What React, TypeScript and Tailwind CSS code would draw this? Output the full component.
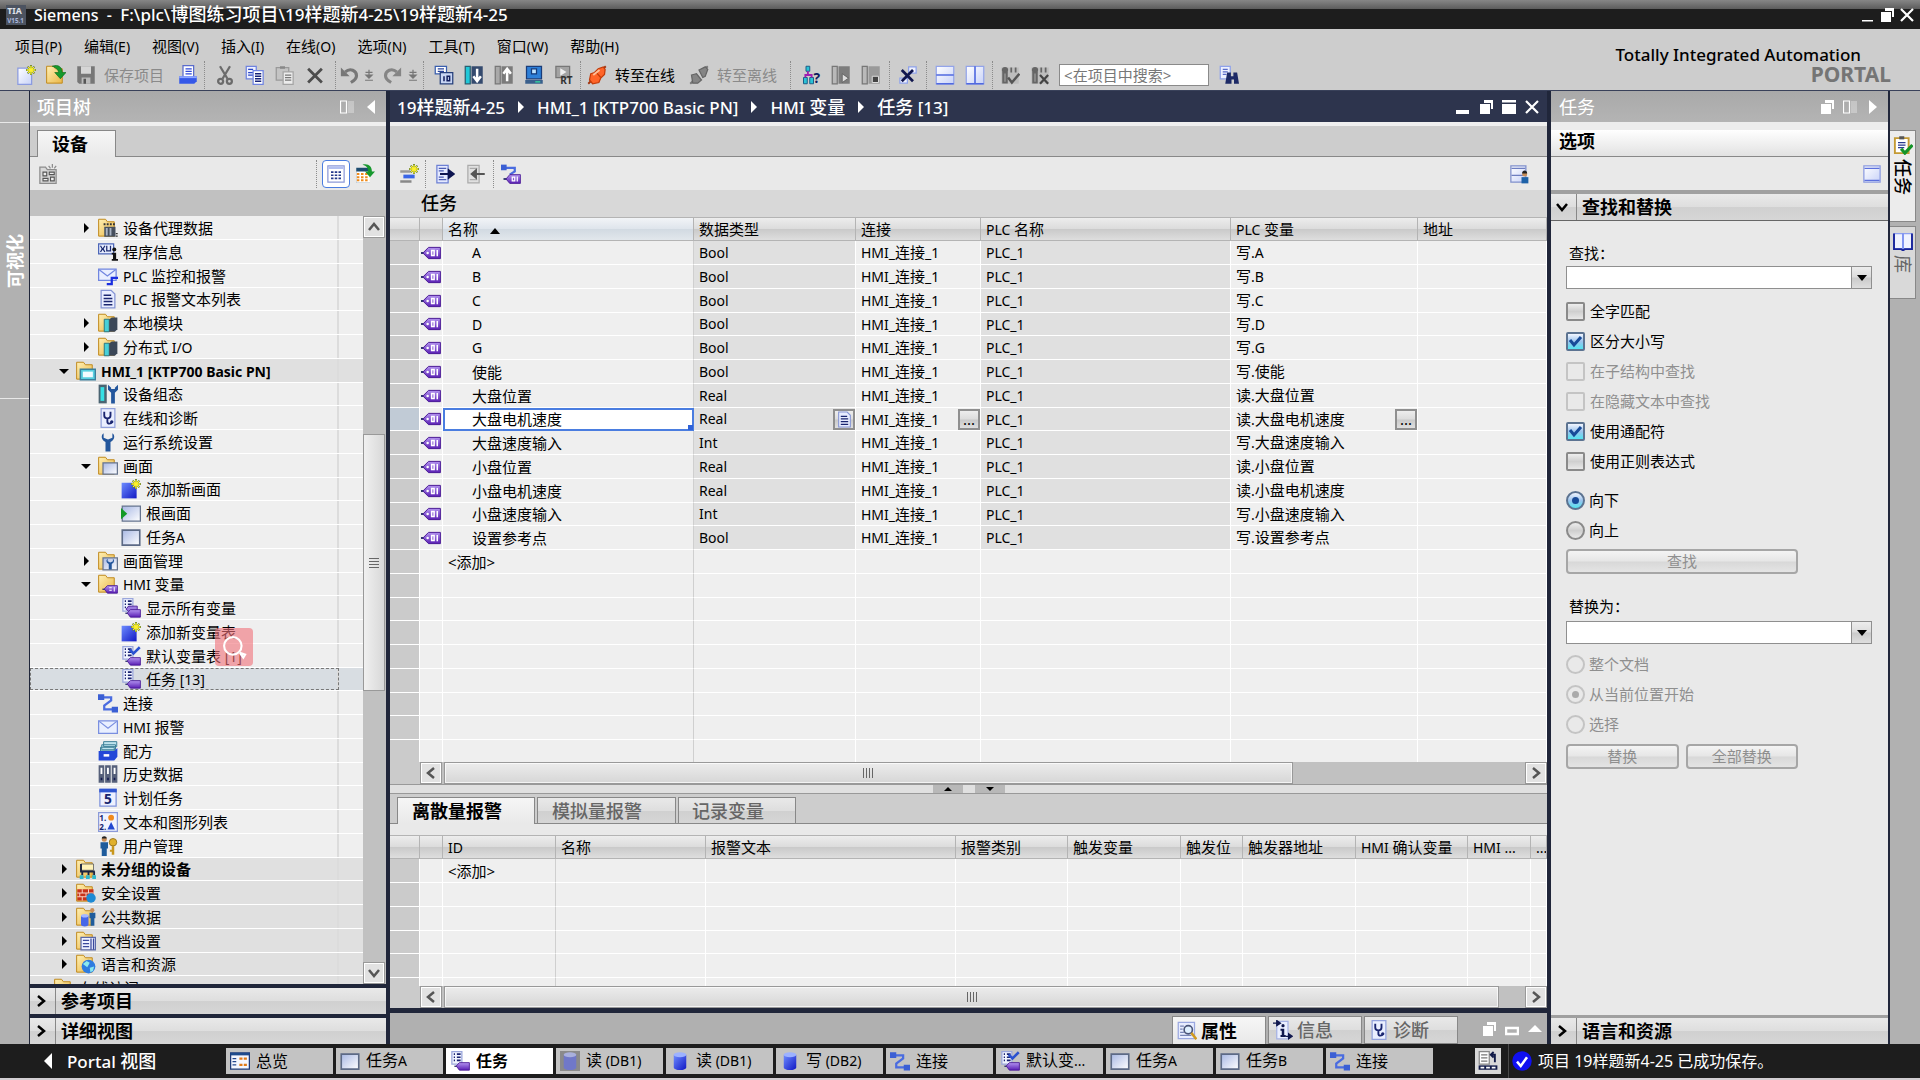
import { Fragment, type ReactNode } from "react"

const HEAD = "bg-[linear-gradient(#ededed,#dcdcdc_48%,#cacaca_52%,#dedede)]"
const BAR = "bg-[linear-gradient(#e9e9e9,#dedede_50%,#d0d0d0_52%,#d6d6d6)]"
const PANEL_HEAD = "bg-[linear-gradient(#a9a9a9,#b4b4b4)]"

const folder = <path d="M.5 1h5.500L7.500 3H13v11.500H.5z" fill="url(#gFolder)" stroke="#c08a1e" strokeWidth=".8" />
const list = (
    <>
        <path d="M1.5.5h8v10h-8z" fill="#f2f5ff" stroke="#9aa6dc" />
        <path d="M3 2.5h1M3 5h1M3 7.500h1M5.500 2.500h3M5.500 5h3M5.500 7.500h3" stroke="#1b2472" strokeWidth="1.300" />
    </>
)
const smallTag = (
    <>
        <path d="M3.500 12.200h2" stroke="#222a66" />
        <path d="M5 12l2.500-2.700h8v6h-8z" fill="url(#gPurple)" stroke="#4a1a96" strokeWidth=".7" />
    </>
)
const star = (
    <>
        <path d="M12 0v8M8 4h8M9.300 1.300l5.400 5.400M14.700 1.300L9.300 6.700" stroke="#5c7a3c" strokeWidth="1.600" />
        <path d="M12 .5v7M8.500 4h7M9.700 1.700l4.600 4.600M14.300 1.700L9.700 6.300" stroke="#fff22a" strokeWidth="1.100" />
    </>
)
const wrench = (fill: string) => <path d="M4.500 1v3.500L8 6l3.500-1.500V1c2 1 2.500 5-1.500 7v7.500H6V8C2 6 2.500 2 4.500 1z" fill={fill} />

const ICONS: Record<string, ReactNode> = {
    logo: (
        <>
            <path d="M0 0h16v16H0z" fill="#4c5360" />
            <text x="1" y="7.500" fontSize="7" fontWeight="700" fill="#dfe3ea">TIA</text>
            <text x="1" y="14" fontSize="5" fontWeight="700" fill="#a9b6dc">V15.1</text>
        </>
    ),
    newFile: (
        <>
            <path d="M1.500 2.500h11v13h-11z" fill="url(#gWin)" stroke="#8b9be0" />
            {star}
        </>
    ),
    open: (
        <>
            {folder}
            <path d="M5 1c5-2 8 1 8 5h3l-4.500 5L7 6h3c0-2-2-4-5-5z" fill="#159a2c" stroke="#0a6a1a" strokeWidth=".5" />
        </>
    ),
    save: (
        <>
            <path d="M1 1h14v14H2.500L1 13.500z" fill="#777" />
            <path d="M4 1h8v6H4z" fill="#d6d6d6" />
            <path d="M4.500 10h7v5h-7z" fill="#bbb" />
            <path d="M6 11h2v4H6z" fill="#555" />
        </>
    ),
    print: (
        <>
            <path d="M4 .5h8.500V10H4z" fill="#fff" stroke="#5a6ccc" />
            <path d="M6 3h5M6 5h5M6 7h5" stroke="#2f49d8" />
            <path d="M1 9h14v4l-2 2H1z" fill="#3558e8" />
            <path d="M1 9h14v1.500H1z" fill="#8ca4ff" />
        </>
    ),
    cut: (
        <g fill="none" stroke="#6b6b6b" strokeWidth="1.800">
            <path d="M4 1l6 10M12 1L6 11" />
            <circle cx="4.500" cy="13" r="2" />
            <circle cx="11.500" cy="13" r="2" />
        </g>
    ),
    copy: (
        <>
            <path d="M1 1h8v10H1z" fill="#eef1ff" stroke="#6f83e0" />
            <path d="M2.500 3.500h4M2.500 6h4M2.500 8h4" stroke="#2b46c4" />
            <path d="M6.500 4.500h8v11h-8z" fill="#fff" stroke="#6f83e0" />
            <path d="M8 7h5M8 9h5M8 11h5M8 13h5" stroke="#16237a" strokeWidth="1.200" />
        </>
    ),
    paste: (
        <>
            <path d="M1 2h10v10H1z" fill="#c4c4c4" stroke="#999" />
            <path d="M4 1h4v2H4z" fill="#888" />
            <path d="M6.500 5.500h8v10h-8z" fill="#ececec" stroke="#a4a4a4" />
            <path d="M8 8h5M8 10h5M8 12h5" stroke="#777" />
        </>
    ),
    del: <path d="M2.500 3l11 11M13.500 3l-11 11" stroke="#4d4d4d" strokeWidth="2.200" />,
    undo: (
        <>
            <path d="M1.500 2v7h7z" fill="#777" />
            <path d="M5 5.500c4-3.500 9-1 9 3 0 2.500-2 4-4.500 5.500" fill="none" stroke="#777" strokeWidth="2.500" />
        </>
    ),
    redo: (
        <>
            <path d="M14.500 2v7h-7z" fill="#858585" />
            <path d="M11 5.500c-4-3.500-9-1-9 3C2 11 4 12.500 6.500 14" fill="none" stroke="#858585" strokeWidth="2.500" />
        </>
    ),
    more: <path d="M8 2v6M4 5h8M4.500 8h7L8 11.500zM3.500 14h9" stroke="#777" strokeWidth="1.400" fill="#777" />,
    compile: (
        <>
            <path d="M1 1h9v6H1z" fill="#fff" stroke="#3a5fae" />
            <path d="M3 3h5M3 5h5" stroke="#29439c" />
            <path d="M5 6h10v9H5z" fill="#c8d6f4" stroke="#27407c" />
            <path d="M8 9v4M10.500 9h2v3.500h-2z" stroke="#101d5c" fill="none" strokeWidth="1.200" />
        </>
    ),
    download: (
        <>
            <path d="M1 1h4v14H1z" fill="#20c8d8" stroke="#2a5f70" />
            <path d="M6 1h9v14H6z" fill="#344a6e" />
            <path d="M10.500 3v9M7.500 9l3 4 3-4" stroke="#fff" strokeWidth="2" fill="none" />
        </>
    ),
    upload: (
        <>
            <path d="M1 1h4v14H1z" fill="#a9a9a9" stroke="#777" />
            <path d="M6 1h9v14H6z" fill="#7b7b7b" />
            <path d="M10.500 13V4M7.500 7l3-4 3 4" stroke="#fff" strokeWidth="2" fill="none" />
        </>
    ),
    sim: (
        <>
            <path d="M2 1h12v10H2z" fill="#2d7fd8" stroke="#1a3c78" />
            <path d="M6 3h4v4H6z" fill="#bfe3ff" stroke="#143a7a" />
            <path d="M1 12h14v3H1z" fill="#3a5f8c" />
            <path d="M9 13.500h4" stroke="#35e0a0" />
        </>
    ),
    rt: (
        <>
            <path d="M1.500 1h11v9h-11z" fill="#a3a3a3" stroke="#777" />
            <path d="M5 2.500l5 3-5 3z" fill="#eee" />
            <text x="5" y="15" fontSize="8" fontWeight="700" fill="#333">RT</text>
        </>
    ),
    plug: (
        <>
            <path d="M1 15l3-3M12 4l3-3" stroke="#a03410" strokeWidth="1.500" />
            <path d="M3 7l3-1 3-3 4-1.500 1.500 2-.5 4-3 3-1.500 3.500-5 1-2.500-3z" fill="#ff6428" stroke="#c23c0a" />
            <path d="M7 5.500l4 4.500" stroke="#c23c0a" />
            <path d="M5 8l5-4" stroke="#ffc09a" strokeWidth="1.500" />
        </>
    ),
    unplug: (
        <>
            <path d="M1 15l3-3M12 4l3-3" stroke="#777" strokeWidth="1.500" />
            <path d="M2 8l4-1 4 5-3 2.500H3zM8 4l5-2.500 2 2L13 9l-2 1z" fill="#858585" stroke="#666" />
        </>
    ),
    access: (
        <>
            <path d="M4 1h3v4H4zM2 10h3v5H2zM7 10h3v5H7z" fill="#2ac3d6" stroke="#1c5f88" strokeWidth=".8" />
            <path d="M5.500 5v3M3.500 10V8h5v2" stroke="#a01fb0" strokeWidth="1.500" fill="none" />
            <text x="10" y="14" fontSize="11" fontWeight="700" fill="#101a5e">?</text>
        </>
    ),
    start: (
        <>
            <path d="M1 1h4v14H1z" fill="#b9b9b9" stroke="#777" />
            <path d="M6 1h9v14H6z" fill="#7d7d7d" />
            <path d="M9 7l5 3.500L9 14z" fill="#ddd" stroke="#555" strokeWidth=".6" />
        </>
    ),
    stop: (
        <>
            <path d="M1 1h4v14H1z" fill="#b9b9b9" stroke="#777" />
            <path d="M6 1h9v14H6z" fill="#9a9a9a" />
            <path d="M9 9h5v5H9z" fill="#444" stroke="#ddd" strokeWidth=".8" />
        </>
    ),
    cross: (
        <>
            <path d="M8.500 1.500h6v5h-6zM1.500 10.500h6v4h-6z" fill="#eef1ff" stroke="#8fa2ea" />
            <path d="M3 4l9 9M12 4l-9 9" stroke="#10164e" strokeWidth="2.200" />
        </>
    ),
    splitH: (
        <>
            <path d="M1 1h14v14H1z" fill="url(#gWin)" stroke="#93a4ea" />
            <path d="M1 8h14M1 15h14" stroke="#5069e0" strokeWidth="1.300" />
        </>
    ),
    splitV: (
        <>
            <path d="M1 1h14v14H1z" fill="url(#gWin)" stroke="#93a4ea" />
            <path d="M8 1v14M1 15h14" stroke="#5069e0" strokeWidth="1.300" />
        </>
    ),
    libOk: (
        <>
            <path d="M1 2h14v13H1z" fill="#bdbdbd" />
            <circle cx="4" cy="4" r="2.500" fill="#666" />
            <path d="M2.500 6h3v8h-3zM9 2v4M12.500 2v4" stroke="#666" strokeWidth="1.400" fill="#888" />
            <path d="M6.500 10l3 4 6-7" stroke="#555" strokeWidth="2" fill="none" />
        </>
    ),
    libNo: (
        <>
            <path d="M1 2h14v13H1z" fill="#bdbdbd" />
            <circle cx="4" cy="4" r="2.500" fill="#666" />
            <path d="M2.500 6h3v8h-3zM9 2v4M12.500 2v4" stroke="#666" strokeWidth="1.400" fill="#888" />
            <path d="M8 8l6.500 7M14.500 8L8 15" stroke="#444" strokeWidth="1.800" />
        </>
    ),
    find: (
        <>
            <path d="M1 1h8v10H1z" fill="#eef1ff" stroke="#8fa2ea" />
            <path d="M3 3.500h4M3 5.500h4M3 7.500h3" stroke="#5a6cc8" />
            <path d="M6.500 6h3v3h2V6h3l1.500 9h-4v-3.500h-2V15H5z" fill="#1d2a66" />
        </>
    ),
    treeGrey: (
        <>
            <path d="M1.500 2.500H6l1.500 2h7v11h-13z" fill="#d9d9d9" stroke="#8c8c8c" />
            <path d="M4 6.500h3v3H4zM9 6.500h4v2H9zM4 11.500h4v2H4zM10 10.500h3v3h-3z" stroke="#555" fill="#eee" strokeWidth=".9" />
            <path d="M11.500 0v3M8.500 1.500l1.500 2M14.500 1.500l-1.500 2" stroke="#8c8c8c" />
        </>
    ),
    grid: (
        <>
            <path d="M1.500 1.500h13v13h-13z" fill="#fff" stroke="#8c99d8" />
            <path d="M2 3h12" stroke="#b3c0f0" strokeWidth="2" />
            <path d="M4 6.500h8M4 9h8M4 11.500h8" stroke="#253a8c" strokeDasharray="2 1" strokeWidth="1.300" />
        </>
    ),
    gridGo: (
        <>
            <path d="M1 3h11v12H1z" fill="#1d4c70" />
            <path d="M1 6h11v9H1z" fill="#fff" />
            <path d="M1.500 8h10M1.500 10.500h10M1.500 13h10" stroke="#ef8a1a" strokeDasharray="2 1.300" strokeWidth="1.600" />
            <path d="M6 .5c5-1 7.500 1.500 7.500 5.500H16l-4 4.500L8 6h2.500c0-3-1-4.500-4.500-5.500z" fill="#17982e" />
        </>
    ),
    addRow: (
        <>
            <path d="M1 5h8v2H1z" fill="#999" />
            <path d="M3.500 8.500h9v3h-9z" fill="#3a66e8" />
            <path d="M1 13h9v2H1z" fill="#888" />
            {star}
        </>
    ),
    exportI: (
        <>
            <path d="M1.500 1h9v14h-9z" fill="#e4e9ff" stroke="#6d80d4" />
            <path d="M3 3.500h6M3 12.500h6M3 5.500h4M3 10.500h4" stroke="#4b5db4" />
            <path d="M4 8h9M11 5l4 3-4 3z" stroke="#0d1550" strokeWidth="1.600" fill="#0d1550" />
        </>
    ),
    importI: (
        <>
            <path d="M1.500 1h9v14h-9z" fill="#e0e0e0" stroke="#aaa" />
            <path d="M3 3.500h6M3 12.500h6" stroke="#aaa" />
            <path d="M15 8H6M8 5L4.500 8 8 11z" stroke="#555" strokeWidth="1.500" fill="#555" />
        </>
    ),
    linkTag: (
        <>
            <path d="M3 3h8v3L7 8.500" stroke="#4a6ce0" strokeWidth="1.800" fill="none" />
            <path d="M0 .5h4.500V5H0z" fill="#3b5fd4" />
            <path d="M2 12h3" stroke="#222a66" strokeWidth="1.400" />
            <path d="M4 12l3-3.500h8.500v7H7z" fill="url(#gPurple)" stroke="#4a1a96" strokeWidth=".7" />
            <path d="M9 10.500h2v3H9zM13 10v4" stroke="#fff" fill="none" />
        </>
    ),
    userWin: (
        <>
            <path d="M1.500 1.500h12v13h-12z" fill="url(#gWin)" stroke="#8090cc" />
            <path d="M2 3.500h11M2 9h11" stroke="#6e7ec0" />
            <circle cx="12.500" cy="8" r="2" fill="#c88d58" />
            <path d="M10.500 7.500c0-3 4-3 4 0z" fill="#222" />
            <path d="M10 10.500h5.500v5H10z" fill="#1e62a8" />
        </>
    ),
    win: (
        <>
            <path d="M1.500 1.500h13v13h-13z" fill="url(#gWin)" stroke="#8c9be0" />
            <path d="M2 3.500h12M2 13h12" stroke="#5c70dc" />
        </>
    ),
    clip: (
        <>
            <path d="M1.500 2.500h11v12h-11z" fill="#fff" stroke="#c49a34" strokeWidth="1.500" />
            <path d="M5 1h4v2.500H5z" fill="#555" />
            <path d="M4 6h6M4 8h6M4 10h5" stroke="#2a3a90" />
            <path d="M6.500 11l3 3.500L15.500 8" stroke="#149428" strokeWidth="2.500" fill="none" />
        </>
    ),
    book: (
        <>
            <path d="M1 2h14v12H1z" fill="#f0f3ff" stroke="#8ea0f0" />
            <path d="M.8 2v12.500h5.700l1.500 1 1.500-1h5.700V2" stroke="#18249a" strokeWidth="1.500" fill="none" />
            <path d="M8 2v12" stroke="#7c90f0" strokeWidth="1.500" />
        </>
    ),
    fData: (
        <>
            {folder}
            <path d="M5 7h9v8H5z" fill="#47505e" />
            <path d="M4.500 5h9" stroke="#333" strokeDasharray="1.500 1" strokeWidth="1.600" />
            <path d="M7 8v6M10 8v6" stroke="#aab4c4" strokeWidth="1.500" />
            <path d="M15 12v4" stroke="#333" strokeDasharray="1 1" strokeWidth="1.500" />
        </>
    ),
    prog: (
        <>
            <path d="M.5 1.500h12v8H.5z" fill="#e8eeff" stroke="#4c66b8" />
            <path d="M2 3l1.500 2.500L2 8M5.500 3L4 5.500 5.500 8M7 3v4h3V3" stroke="#1b2a70" fill="none" />
            <circle cx="13" cy="6" r="1.600" fill="#111" />
            <path d="M11 8.500h3.500v5H16V15h-5v-1.500h1V10h-1z" fill="#111" />
        </>
    ),
    mailPlc: (
        <>
            <path d="M.5 2.500h14v9H.5z" fill="#e9efff" stroke="#7186e0" />
            <path d="M1 3l6.500 5L14 3" stroke="#7186e0" fill="none" />
            <path d="M7 14.500h4V9.500h5" stroke="#1a2ee0" strokeWidth="1.800" fill="none" />
        </>
    ),
    mail: (
        <>
            <path d="M.5 3h15v10H.5z" fill="#e9efff" stroke="#7a8fe0" />
            <path d="M1 3.500L8 9l7-5.500" stroke="#7a8fe0" fill="none" />
        </>
    ),
    doc: (
        <>
            <path d="M2.500 1h8l3 3v11h-11z" fill="#e8edff" stroke="#8494d4" />
            <path d="M4.500 5h6M4.500 7.500h7M4.500 10h7M4.500 12.500h7" stroke="#1a2670" strokeWidth="1.200" />
        </>
    ),
    fModule: (
        <>
            {folder}
            <path d="M5 5h4v10H5z" fill="#48d0d8" stroke="#2c7880" strokeWidth=".8" />
            <path d="M9 5l2-1.500h4.500V13l-2 2H9z" fill="#3b4758" />
        </>
    ),
    fHmi: (
        <>
            {folder}
            <path d="M3.500 6.500h12v8.500h-12z" fill="#58cfe0" stroke="#3a7f9c" strokeWidth="1.200" />
            <path d="M5.500 8.500h8v4.500h-8z" fill="#f2fbff" />
        </>
    ),
    config: (
        <>
            <path d="M.5.5h6.500v15H.5z" fill="#4b6472" />
            <path d="M2 2.500h3v11H2z" fill="#36e0e4" />
            <path d="M8 .5v4L10.500 7v8.500h3V7L16 4.500v-4L13.500 3v1h-3V3z" fill="#23569c" />
        </>
    ),
    diag: (
        <>
            <path d="M2.500.5h11v15h-11z" fill="#eaefff" stroke="#93a2dc" />
            <path d="M5 3v3c0 3 5 3 5 0V3M7.500 8.500V11c0 2 3 2 3.500 0" stroke="#1a2670" strokeWidth="1.500" fill="none" />
            <circle cx="11" cy="11" r="1.300" fill="#1a2670" />
        </>
    ),
    wrench: wrench("#23569c"),
    fScreen: (
        <>
            {folder}
            <path d="M4 5.500h11.500v9H4z" fill="url(#gScreen)" stroke="#66748e" />
        </>
    ),
    addNew: (
        <>
            <path d="M.5 3h12v12.500H.5z" fill="url(#gBlue)" />
            {star}
        </>
    ),
    rootScreen: (
        <>
            <path d="M1 2.500h14.500v12H1z" fill="url(#gScreen)" stroke="#66748e" />
            <path d="M0 4l5 4.500L0 13z" fill="#139a26" />
        </>
    ),
    screen: <path d="M1 2.500h14v12H1z" fill="url(#gScreen)" stroke="#5c6a86" strokeWidth="1.300" />,
    fManage: (
        <>
            {folder}
            <path d="M4 5.500h11.500v9.500H4z" fill="url(#gScreen)" stroke="#66748e" />
            <g transform="translate(5 5.500) scale(.6)">{wrench("#23569c")}</g>
        </>
    ),
    fTag: (
        <>
            {folder}
            {smallTag}
            <path d="M9 11h2M9 13h2M13 10.500v3.500" stroke="#fff" strokeWidth=".8" />
        </>
    ),
    allTags: (
        <>
            {list}
            <path d="M4 9l2-2.500h7v4H6z" fill="#9c7be0" stroke="#4a1a96" strokeWidth=".7" />
            {smallTag}
        </>
    ),
    defTags: (
        <>
            {list}
            <path d="M7 3l3 3 5-5" stroke="#2a52d0" strokeWidth="2" fill="none" />
            {smallTag}
        </>
    ),
    tags: (
        <>
            {list}
            {smallTag}
        </>
    ),
    link: (
        <>
            <path d="M3 3.500h7.500V6L5 10v3h8" stroke="#4a6ce0" strokeWidth="1.800" fill="none" />
            <path d="M0 1h5v4.500H0zM11 11h5v4.500h-5z" fill="#3b5fd4" />
        </>
    ),
    recipe: (
        <>
            <path d="M4.500 .5H15v4H4.500zM3 3h11v4H3zM2 5h11v3H2z" fill="#bfe4ee" stroke="#3e8098" strokeWidth=".8" />
            <path d="M.5 8h12.500l2.500-2.500v7L13 15.500H.5z" fill="#2348d8" />
            <path d="M4.500 10.500h4.500v2H4.500z" fill="#fff" />
        </>
    ),
    history: (
        <>
            <path d="M.5 1h4.500v14H.5zM5.700 1h4.500v14H5.700zM11 1h4.500v14H11z" fill="#56607a" />
            <path d="M2 3h1.500v5H2zM7.200 3h1.500v5H7.200zM12.500 3H14v5h-1.500z" fill="#fff" />
            <path d="M2.800 11v2M8 11v2M13.200 11v2" stroke="#10184e" strokeWidth="1.300" />
        </>
    ),
    task: (
        <>
            <path d="M1.500 1.500h13v13h-13z" fill="#eef1ff" stroke="#7f92dc" />
            <path d="M1 .5h14v3H1z" fill="#2f55d0" />
            <text x="4.800" y="13" fontSize="11" fontWeight="700" fill="#17246e">5</text>
        </>
    ),
    textList: (
        <>
            <path d="M.5.500h15v15H.5z" fill="#f2f4ff" stroke="#8b9ad8" />
            <text x="1" y="7" fontSize="6.500" fontWeight="700" fill="#17246e">1.</text>
            <text x="1" y="14.500" fontSize="6.500" fontWeight="700" fill="#17246e">2.</text>
            <circle cx="10.500" cy="4.500" r="2.300" fill="#f08a1c" />
            <path d="M10.500 8l3 6h-6z" fill="#2348d0" />
        </>
    ),
    users: (
        <>
            <circle cx="5" cy="2.500" r="2" fill="#c88d58" />
            <path d="M3 2c0-2.500 4-2.500 4 0z" fill="#222" />
            <path d="M2 5h6v5H7v6H3v-6H2z" fill="#1f5c9c" />
            <circle cx="12" cy="5" r="3" fill="#e0b02c" stroke="#93701a" strokeWidth=".7" />
            <path d="M11 8h2v7h-2zM9.500 11H11v1.500H9.500z" fill="#c8961c" />
        </>
    ),
    fUngrouped: (
        <>
            {folder}
            <path d="M4 4h10v5H4z" fill="#fff2b8" stroke="#666" strokeWidth=".7" />
            <path d="M4 4v6h11M5 10v3M10 10v3M14.500 10v3" stroke="#1a2440" strokeWidth="1.500" fill="none" />
            <path d="M3 13h3v3H3zM8 13h3v3H8zM13 13h3v3h-3z" fill="#2fb8cc" />
        </>
    ),
    fSafe: (
        <>
            {folder}
            <path d="M1 5h13v9H1z" fill="#c8321a" />
            <path d="M1 8h13M1 11h13M5 5v3M10 5v3M3 8v3M8 8v3M5 11v3" stroke="#f6d0c4" strokeWidth=".8" />
            <circle cx="12" cy="12" r="3.800" fill="#1d8ad4" />
        </>
    ),
    fShared: (
        <>
            {folder}
            <path d="M4 7v7c0 2 6 2 6 0V7z" fill="#4667e8" />
            <ellipse cx="7" cy="7" rx="3" ry="1.400" fill="#a5b8ff" />
            <circle cx="13" cy="2.500" r="1.700" fill="#c88d58" />
            <path d="M10.800 4.500h4.700V9h-.8v6h-3V9h-.9z" fill="#1f5c9c" />
        </>
    ),
    fDocs: (
        <>
            {folder}
            <path d="M4 5h11.500v10H4z" fill="#eef1ff" stroke="#5a68a8" />
            <path d="M5.500 7.500h5M5.500 10h5M5.500 12.500h5M12 6v9M14 6v9" stroke="#3a489c" />
        </>
    ),
    fLang: (
        <>
            {folder}
            <circle cx="10" cy="10" r="5.500" fill="#2f7ce0" />
            <path d="M5.500 8l3-2.500L11 7l-2 3.500zM11 11l3.500-1-1 3.500-2 1z" fill="#8be8ee" />
        </>
    ),
    folder,
    tag: (
        <>
            <path d="M0 8h3" stroke="#222a66" strokeWidth="1.500" />
            <path d="M1.500 8L6 3.500h9.500v9H6z" fill="url(#gPurple)" stroke="#4a1a96" strokeWidth=".8" />
            <path d="M8.500 6h2v4h-2zM13 5.500v5" stroke="#fff" strokeWidth="1.200" fill="none" />
            <circle cx="5.300" cy="8" r="1" fill="#fff" />
        </>
    ),
    overview: (
        <>
            <path d="M.5 1.500h15v13H.5z" fill="#f4f6ff" stroke="#1e3a78" />
            <path d="M.5 1.500h15v2H.5z" fill="#1e4a8c" />
            <path d="M2 6h3M2 8.500h3M2 11h3" stroke="#23468c" />
            <path d="M7.500 6h6M7.500 11h6" stroke="#e07a18" strokeWidth="1.800" strokeDasharray="2.500 1" />
        </>
    ),
    db: (
        <>
            <path d="M3 3v10c0 3 10 3 10 0V3z" fill="url(#gBlue)" />
            <ellipse cx="8" cy="3" rx="5" ry="2" fill="#9db2ff" />
        </>
    ),
    dbGrey: (
        <>
            <path d="M0 0h16v16H0z" fill="#8a8a8a" />
            <path d="M3 3v10c0 3 10 3 10 0V3z" fill="#7078c8" />
            <ellipse cx="8" cy="3" rx="5" ry="2" fill="#a9b0dc" />
        </>
    ),
    props: (
        <>
            <path d="M1 1h13v13H1z" fill="#e8edff" stroke="#9aa8e0" />
            <path d="M2.500 4h3M2.500 6.500h2M2.500 9h3M2.500 11.500h9" stroke="#7684b4" />
            <circle cx="9" cy="7" r="3.300" fill="#dff0ff" stroke="#4a5578" strokeWidth="1.300" />
            <path d="M11.500 9.500l4 5" stroke="#d09a20" strokeWidth="2" />
        </>
    ),
    info: (
        <>
            <path d="M3 1h9v14H3z" fill="#eaefff" stroke="#a6b2e4" />
            <path d="M0 2.500h4M3 .5l3 2-3 2zM10 13h4M12.500 11l3 2-3 2z" stroke="#10184e" fill="#10184e" />
            <circle cx="8" cy="4.500" r="1.300" fill="#10184e" />
            <path d="M6 7h3v5h1.200v1.500H6V12h1V8.500H6z" fill="#10184e" />
        </>
    ),
    switchWin: (
        <>
            <path d="M1 .5h8v10H1z" fill="#fff" stroke="#888" />
            <path d="M2.500 3h5M2.500 5.500h5M2.500 8h5" stroke="#777" />
            <path d="M13.500 9V3H11M12.500 .8L10.200 3l2.300 2.200" stroke="#111a48" strokeWidth="1.500" fill="none" />
            <path d="M.5 11.500h15v3.500H.5z" fill="#111a48" />
            <path d="M2 13.300h12" stroke="#fff" strokeDasharray="3 1.500" strokeWidth="1.500" />
        </>
    ),
    ok: (
        <>
            <circle cx="8" cy="8" r="7.800" fill="#1010f0" />
            <path d="M4 8.500l3 3.500 5-7" stroke="#fff" strokeWidth="2" fill="none" />
        </>
    ),
}

const Icon = ({ name, className = "size-5" }: { name: string; className?: string }) => (
    <svg viewBox="0 0 16 16" className={`${className} shrink-0`} aria-hidden="true">
        {ICONS[name]}
    </svg>
)

// Latin runs are set a little smaller than the Chinese text around them
const Mixed = ({ text, latin = "text-sm" }: { text: string; latin?: string }) => (
    <>
        {text.split(/([\x20-\x7e]+)/).map((part, i) =>
            i % 2 ? <span key={i} className={`${latin} whitespace-pre`}>{part}</span> : <Fragment key={i}>{part}</Fragment>
        )}
    </>
)

const Defs = () => (
    <svg className="absolute size-0" aria-hidden="true">
        <defs>
            <linearGradient id="gFolder" x1="0" y1="0" x2="1" y2="1">
                <stop offset="0" stopColor="#fff0b4" />
                <stop offset="1" stopColor="#eab748" />
            </linearGradient>
            <linearGradient id="gBlue" x1="0" y1="0" x2="1" y2="1">
                <stop offset="0" stopColor="#6d8cff" />
                <stop offset="1" stopColor="#1218c4" />
            </linearGradient>
            <linearGradient id="gPurple" x1="0" y1="0" x2="0" y2="1">
                <stop offset="0" stopColor="#b394f0" />
                <stop offset="1" stopColor="#5a1fb4" />
            </linearGradient>
            <linearGradient id="gWin" x1="0" y1="0" x2="1" y2="1">
                <stop offset="0" stopColor="#ffffff" />
                <stop offset="1" stopColor="#c8d2f8" />
            </linearGradient>
            <linearGradient id="gScreen" x1="0" y1="0" x2="1" y2="1">
                <stop offset="0" stopColor="#a8b8e4" />
                <stop offset="1" stopColor="#ffffff" />
            </linearGradient>
        </defs>
    </svg>
)

const WIN_SHAPES: Record<string, ReactNode> = {
    min: <path d="M0 10h13v4H0z" />,
    thinMin: <path d="M2 12h11v1.500H2z" />,
    restore: <path d="M5 0h9v9h-2V3H5zM1 4h10v10H1z" />,
    max: <path d="M0 0h14v2.500H0zM0 4h14v10H0z" />,
    close: <path d="M1 1l12 12M13 1L1 13" stroke="currentColor" strokeWidth="2.200" />,
    columns: (
        <>
            <path d="M.5 1h6v12h-6z" fill="none" stroke="currentColor" strokeWidth="1.200" />
            <path d="M9 1v12M11 1v12M13 1v12" stroke="currentColor" opacity=".6" />
        </>
    ),
    left: <path d="M11 0v14L3 7z" />,
    right: <path d="M3 0v14l8-7z" />,
    up: <path d="M0 10h14L7 3z" />,
    bar: <path d="M1 6h12v6H1z" fill="none" stroke="currentColor" strokeWidth="2.500" />,
}

const WinButton = ({ shape, label }: { shape: string; label: string }) => (
    <button aria-label={label} className="flex size-[14px] text-white">
        <svg viewBox="0 0 14 14" className="size-full" fill="currentColor">{WIN_SHAPES[shape]}</svg>
    </button>
)

const Chevron = ({ d, className = "text-[#555]" }: { d: string; className?: string }) => (
    <svg viewBox="0 0 12 12" className={`size-3 shrink-0 ${className}`} fill="none" stroke="currentColor" strokeWidth="2.500">
        <path d={d} />
    </svg>
)
const UP = "M1 9l5-6 5 6"
const DOWN = "M1 3l5 6 5-6"
const LEFT = "M9 1L3 6l6 5"
const RIGHT = "M3 1l6 5-6 5"

const Sep = () => <span className="h-7 border-l border-dotted border-[#8c8c8c]" />

const MENUS = ["项目(P)", "编辑(E)", "视图(V)", "插入(I)", "在线(O)", "选项(N)", "工具(T)", "窗口(W)", "帮助(H)"]

const Tool = ({ name, label }: { name: string; label: string }) => (
    <button aria-label={label} title={label} className="flex">
        <Icon name={name} />
    </button>
)

const TitleBar = () => (
    <div className="flex h-[29px] shrink-0 items-center justify-between bg-[linear-gradient(#868686,#5c5c5c_9px,#1d1d1d_9px)] px-[6px] text-lg leading-none text-white">
        <div className="flex items-center gap-2">
            <Icon name="logo" />
            <span className="whitespace-pre font-medium">
                <Mixed text="Siemens  -  " latin="text-base" />
                <Mixed text="F:\plc\博图练习项目\19样题新4-25\19样题新4-25" latin="text-[17px]" />
            </span>
        </div>
        <div className="flex gap-[6px]">
            <WinButton shape="thinMin" label="最小化" />
            <WinButton shape="restore" label="还原" />
            <WinButton shape="close" label="关闭" />
        </div>
    </div>
)

const Header = () => (
    <header className="flex h-[62px] shrink-0 justify-between border-b border-[#39415a] bg-[#cdcdcd]">
        <div>
            <nav className="flex h-[34px] items-center gap-[22px] px-[15px] text-[15px]">
                {MENUS.map((m) => <button key={m}><Mixed text={m} /></button>)}
            </nav>
            <div className="flex h-6 items-center gap-[10px] pl-4 text-[15px]">
                <Tool name="newFile" label="新建" />
                <Tool name="open" label="打开" />
                <button className="flex items-center gap-2 text-[#8a8a8a]"><Icon name="save" />保存项目</button>
                <span className="flex items-center gap-[6px] pl-1">
                    <Tool name="print" label="打印" />
                    <Sep />
                </span>
                <Tool name="cut" label="剪切" />
                <Tool name="copy" label="复制" />
                <Tool name="paste" label="粘贴" />
                <Tool name="del" label="删除" />
                <span className="flex items-center gap-[3px]">
                    <Sep />
                    <Tool name="undo" label="撤销" />
                    <Icon name="more" className="size-[14px]" />
                    <span className="pl-1"><Tool name="redo" label="重做" /></span>
                    <Icon name="more" className="size-[14px]" />
                    <Sep />
                </span>
                <Tool name="compile" label="编译" />
                <Tool name="download" label="下载" />
                <Tool name="upload" label="上传" />
                <Tool name="sim" label="仿真" />
                <span className="flex items-center gap-[6px]">
                    <Tool name="rt" label="运行系统" />
                    <Sep />
                    <button className="flex items-center gap-2 pr-1"><Icon name="plug" />转至在线</button>
                </span>
                <button className="flex items-center gap-2 pr-[3px] text-[#8a8a8a]"><Icon name="unplug" />转至离线</button>
                <Sep />
                <Tool name="access" label="可访问的设备" />
                <Tool name="start" label="启动" />
                <span className="flex items-center gap-2">
                    <Tool name="stop" label="停止" />
                    <Sep />
                    <Tool name="cross" label="交叉引用" />
                    <Sep />
                    <Tool name="splitH" label="水平拆分" />
                </span>
                <span className="flex items-center gap-[7px]">
                    <Tool name="splitV" label="垂直拆分" />
                    <Sep />
                    <Tool name="libOk" label="检查" />
                </span>
                <span className="flex items-center gap-[9px]">
                    <Tool name="libNo" label="取消检查" />
                    <input
                        aria-label="在项目中搜索"
                        placeholder="<在项目中搜索>"
                        className="h-[22px] w-[150px] border border-[#8a8a8a] bg-white px-1 text-[15px] leading-none placeholder:text-[#777]"
                    />
                </span>
                <Tool name="find" label="搜索" />
            </div>
        </div>
        <div className="flex flex-col items-end pr-[29px] pt-4">
            <div className="pr-[30px] text-[17px] font-medium leading-5">Totally Integrated Automation</div>
            <div className="text-[21px] font-bold leading-[18px] text-[#757575]">PORTAL</div>
        </div>
    </header>
)

type Node = { text: string; icon: string; depth: number; arrow?: "right" | "down"; shaded?: boolean; bold?: boolean; selected?: boolean }

const TREE: Node[] = [
    { text: "设备代理数据", icon: "fData", depth: 1, arrow: "right" },
    { text: "程序信息", icon: "prog", depth: 1 },
    { text: "PLC 监控和报警", icon: "mailPlc", depth: 1 },
    { text: "PLC 报警文本列表", icon: "doc", depth: 1 },
    { text: "本地模块", icon: "fModule", depth: 1, arrow: "right" },
    { text: "分布式 I/O", icon: "fModule", depth: 1, arrow: "right" },
    { text: "HMI_1 [KTP700 Basic PN]", icon: "fHmi", depth: 0, arrow: "down", shaded: true, bold: true },
    { text: "设备组态", icon: "config", depth: 1 },
    { text: "在线和诊断", icon: "diag", depth: 1 },
    { text: "运行系统设置", icon: "wrench", depth: 1 },
    { text: "画面", icon: "fScreen", depth: 1, arrow: "down" },
    { text: "添加新画面", icon: "addNew", depth: 2 },
    { text: "根画面", icon: "rootScreen", depth: 2 },
    { text: "任务A", icon: "screen", depth: 2 },
    { text: "画面管理", icon: "fManage", depth: 1, arrow: "right" },
    { text: "HMI 变量", icon: "fTag", depth: 1, arrow: "down" },
    { text: "显示所有变量", icon: "allTags", depth: 2 },
    { text: "添加新变量表", icon: "addNew", depth: 2 },
    { text: "默认变量表 [1]", icon: "defTags", depth: 2 },
    { text: "任务 [13]", icon: "tags", depth: 2, selected: true },
    { text: "连接", icon: "link", depth: 1 },
    { text: "HMI 报警", icon: "mail", depth: 1 },
    { text: "配方", icon: "recipe", depth: 1 },
    { text: "历史数据", icon: "history", depth: 1 },
    { text: "计划任务", icon: "task", depth: 1 },
    { text: "文本和图形列表", icon: "textList", depth: 1 },
    { text: "用户管理", icon: "users", depth: 1 },
    { text: "未分组的设备", icon: "fUngrouped", depth: 0, arrow: "right", shaded: true, bold: true },
    { text: "安全设置", icon: "fSafe", depth: 0, arrow: "right", shaded: true },
    { text: "公共数据", icon: "fShared", depth: 0, arrow: "right", shaded: true },
    { text: "文档设置", icon: "fDocs", depth: 0, arrow: "right", shaded: true },
    { text: "语言和资源", icon: "fLang", depth: 0, arrow: "right", shaded: true },
    { text: "在线访问", icon: "folder", depth: -1, shaded: true },
]

const INDENT: Record<number, string> = { [-1]: "pl-0", 0: "pl-[22px]", 1: "pl-[44px]", 2: "pl-[67px]" }

const TreeRow = ({ node }: { node: Node }) => {
    const bg = node.selected ? "bg-[#d8dde2]" : node.shaded ? "bg-[#e0e0e0]" : "bg-[#efefef]"
    return (
        <li className={`flex h-6 shrink-0 border-b border-white nth-[4n]:h-[23px] ${bg}`}>
            <div className={`flex min-w-0 flex-1 items-center border-r-2 border-[#dcdcdc] ${INDENT[node.depth]} ${node.selected ? "outline-1 -outline-offset-1 outline-dashed outline-[#777]" : ""}`}>
                <span className="flex w-6 shrink-0 justify-center">
                    {node.arrow && (
                        <svg viewBox="0 0 10 10" className="size-[10px]">
                            <path d={node.arrow === "right" ? "M3 0v10l5-5z" : "M0 3h10L5 8z"} />
                        </svg>
                    )}
                </span>
                <Icon name={node.icon} />
                <span className={`truncate pl-[5px] leading-[22px] ${node.bold ? "font-bold" : ""}`}>
                    <Mixed text={node.text} />
                </span>
            </div>
            <div className="w-6 shrink-0" />
        </li>
    )
}

const ScrollButton = ({ d, label }: { d: string; label: string }) => (
    <button aria-label={label} className="flex size-[22px] shrink-0 items-center justify-center border border-[#999] bg-[#e2e2e2] outline-1 -outline-offset-2 outline-white">
        <Chevron d={d} />
    </button>
)

const FoldBar = ({ title, open, className = "" }: { title: string; open?: boolean; className?: string }) => (
    <button className={`flex h-[26px] w-full shrink-0 items-center text-left text-lg font-bold leading-none ${BAR} ${className}`}>
        <span className="flex h-full w-[26px] items-center justify-center border-r border-[#888] pr-1">
            <Chevron d={open ? DOWN : RIGHT} className="text-black" />
        </span>
        <span className="pl-[5px]">{title}</span>
    </button>
)

const ProjectTree = () => (
    <aside className="flex w-[361px] shrink-0 flex-col border-l border-r-4 border-[#20263a] bg-[#cdcdcd]">
        <div className={`flex h-[31px] shrink-0 items-center justify-between pl-[7px] pr-[8px] text-lg font-medium text-white ${PANEL_HEAD}`}>
            项目树
            <span className="flex gap-[10px]">
                <WinButton shape="columns" label="列" />
                <WinButton shape="left" label="折叠" />
            </span>
        </div>
        <div className="flex h-[35px] shrink-0 items-end border-t-4 border-[#efefef]">
            <span className="h-full w-[7px] border-b border-[#888]" />
            <button className="h-[27px] w-[79px] border border-b-0 border-[#888] bg-[linear-gradient(#f6f6f6,#e9e9e9)] pl-[14px] text-left text-lg font-bold leading-none">设备</button>
            <span className="h-full flex-1 border-b border-[#888]" />
        </div>
        <div className="flex h-[33px] shrink-0 items-center justify-between bg-[#e9e9e9] pl-2 pr-[11px]">
            <Tool name="treeGrey" label="设备视图" />
            <span className="flex items-center gap-[5px]">
                <Sep />
                <button aria-label="列表" className="flex size-7 items-center justify-center rounded-sm border border-[#4a7de0] bg-white"><Icon name="grid" /></button>
                <Tool name="gridGo" label="详细列表" />
            </span>
        </div>
        <div className="h-[26px] shrink-0 bg-[#c1c1c1]" />
        <div className="flex min-h-0 flex-1">
            <ul className="relative flex min-w-0 flex-1 flex-col overflow-hidden text-[15px]">
                {TREE.map((n) => <TreeRow key={n.text} node={n} />)}
                <li className="absolute left-[185px] top-[412px] flex size-[38px] items-center justify-center rounded bg-[#f07078]/60" aria-hidden="true">
                    <svg viewBox="0 0 24 24" className="size-7" fill="none" stroke="#fff" strokeWidth="1.800">
                        <circle cx="11" cy="11" r="7.500" />
                        <path d="M17 17l3 4 1.500-2.500L17 17" />
                    </svg>
                </li>
            </ul>
            <div className="flex w-[23px] shrink-0 flex-col bg-[#c1c1c1]">
                <ScrollButton d={UP} label="向上滚动" />
                <div className="flex-[196]" />
                <div className="flex w-[22px] flex-[256] flex-col items-center justify-center gap-[2px] border border-[#999] bg-[linear-gradient(90deg,#f0f0f0,#d8d8d8)]">
                    {[1, 2, 3, 4].map((i) => <i key={i} className="h-px w-[10px] bg-[#666]" />)}
                </div>
                <div className="flex-[271]" />
                <ScrollButton d={DOWN} label="向下滚动" />
            </div>
        </div>
        <div className="h-1 shrink-0 bg-[#20263a]" />
        <FoldBar title="参考项目" />
        <div className="h-1 shrink-0 bg-[#20263a]" />
        <FoldBar title="详细视图" />
    </aside>
)

const TAGS = [
    ["A", "Bool", "写.A"],
    ["B", "Bool", "写.B"],
    ["C", "Bool", "写.C"],
    ["D", "Bool", "写.D"],
    ["G", "Bool", "写.G"],
    ["使能", "Bool", "写.使能"],
    ["大盘位置", "Real", "读.大盘位置"],
    ["大盘电机速度", "Real", "读.大盘电机速度"],
    ["大盘速度输入", "Int", "写.大盘速度输入"],
    ["小盘位置", "Real", "读.小盘位置"],
    ["小盘电机速度", "Real", "读.小盘电机速度"],
    ["小盘速度输入", "Int", "写.小盘速度输入"],
    ["设置参考点", "Bool", "写.设置参考点"],
]
const ACTIVE = 7

const TH = `h-6 border-r border-t border-b border-[#b4b4b4] px-[5px] text-left font-normal leading-5 whitespace-nowrap overflow-hidden ${HEAD}`
const TD = "border-r border-b border-white p-0 pl-[5px] leading-5 whitespace-nowrap overflow-hidden"
const ROW = "h-6 nth-[4n]:h-[23px]"

const CellButton = ({ children, label }: { children: ReactNode; label: string }) => (
    <button aria-label={label} className={`flex h-[21px] w-[22px] shrink-0 items-center justify-center border-2 border-[#8f8f8f] leading-none ${HEAD}`}>{children}</button>
)

const TagTable = () => (
    <div className="min-h-0 flex-1 overflow-hidden bg-[#efefef]">
        <table className="w-full table-fixed border-separate border-spacing-0 text-[15px]">
            <colgroup>
                <col className="w-[30px]" />
                <col className="w-[23px]" />
                <col className="w-[251px]" />
                <col className="w-[162px]" />
                <col className="w-[125px]" />
                <col className="w-[250px]" />
                <col className="w-[187px]" />
                <col />
            </colgroup>
            <thead>
                <tr>
                    <th className={TH} />
                    <th className={TH} />
                    <th className={`${TH} bg-[linear-gradient(#f2f4f7,#dfe5ec_48%,#d2dae2_52%,#e2e7ec)]`}>
                        名称
                        <svg viewBox="0 0 10 10" className="ml-3 inline size-[10px]"><path d="M0 8h10L5 2z" /></svg>
                    </th>
                    <th className={TH}>数据类型</th>
                    <th className={TH}>连接</th>
                    <th className={TH}><Mixed text="PLC 名称" /></th>
                    <th className={TH}><Mixed text="PLC 变量" /></th>
                    <th className={TH}>地址</th>
                </tr>
            </thead>
            <tbody>
                {TAGS.map(([name, type, plc], i) => (
                    <tr key={name} className={ROW}>
                        <td className={`${TD} ${i === ACTIVE ? "bg-[#c1cbd6]" : "bg-[#cbcbcb]"}`} />
                        <td className="border-r border-b border-white p-0"><Icon name="tag" className="mx-auto block size-5" /></td>
                        <td className={`relative ${TD} border-r-[#cfcfcf] ${i === ACTIVE ? "bg-white outline-2 -outline-offset-2 outline-[#4a7de0]" : ""}`}>
                            <span className="pl-6"><Mixed text={name} /></span>
                            {i === ACTIVE && <i className="absolute bottom-0 right-0 size-[5px] bg-[#2f62d8]" />}
                        </td>
                        <td className={`${TD} bg-[#e0e0e0]`}>
                            <div className="flex items-center justify-between text-sm leading-5">
                                {type}
                                {i === ACTIVE && <CellButton label="选择数据类型"><Icon name="doc" className="size-[17px]" /></CellButton>}
                            </div>
                        </td>
                        <td className={TD}>
                            <div className="flex items-center justify-between">
                                <span><Mixed text="HMI_连接_1" /></span>
                                {i === ACTIVE && <CellButton label="选择连接">...</CellButton>}
                            </div>
                        </td>
                        <td className={`${TD} bg-[#e0e0e0]`}><span className="text-sm leading-5">PLC_1</span></td>
                        <td className={TD}>
                            <div className="flex items-center justify-between">
                                <span><Mixed text={plc} /></span>
                                {i === ACTIVE && <CellButton label="选择变量">...</CellButton>}
                            </div>
                        </td>
                        <td className={TD} />
                    </tr>
                ))}
                {Array.from({ length: 10 }, (_, i) => (
                    <tr key={i} className={ROW}>
                        <td className={`${TD} bg-[#cbcbcb]`} />
                        <td className={TD} />
                        <td className={`${TD} border-r-[#cfcfcf]`}>{i === 0 && "<添加>"}</td>
                        <td className={TD} />
                        <td className={TD} />
                        <td className={TD} />
                        <td className={TD} />
                        <td className={TD} />
                    </tr>
                ))}
            </tbody>
        </table>
    </div>
)

const HScroll = ({ thumb, rest }: { thumb: string; rest: string }) => (
    <div className="flex h-[22px] shrink-0 bg-[#c1c1c1]">
        <div className="w-[30px] shrink-0 bg-[#cbcbcb]" />
        <ScrollButton d={LEFT} label="向左滚动" />
        <div className={`ml-[2px] flex items-center justify-center gap-[2px] border border-[#999] bg-[linear-gradient(#ececec,#d6d6d6)] outline-1 -outline-offset-2 outline-white/70 ${thumb}`}>
            {[1, 2, 3, 4].map((i) => <i key={i} className="h-[10px] w-px bg-[#666]" />)}
        </div>
        <div className={rest} />
        <ScrollButton d={RIGHT} label="向右滚动" />
    </div>
)

const ALARM_COLS = ["", "", "ID", "名称", "报警文本", "报警类别", "触发变量", "触发位", "触发器地址", "HMI 确认变量", "HMI ...", "..."]

const AlarmTable = () => (
    <div className="h-[151px] shrink-0 overflow-hidden bg-[#efefef]">
        <table className="w-full table-fixed border-separate border-spacing-0 text-[15px]">
            <colgroup>
                <col className="w-[30px]" />
                <col className="w-[23px]" />
                <col className="w-[113px]" />
                <col className="w-[150px]" />
                <col className="w-[250px]" />
                <col className="w-[112px]" />
                <col className="w-[113px]" />
                <col className="w-[62px]" />
                <col className="w-[113px]" />
                <col className="w-[112px]" />
                <col className="w-[63px]" />
                <col />
            </colgroup>
            <thead>
                <tr>{ALARM_COLS.map((c, i) => <th key={i} className={TH}><Mixed text={c} /></th>)}</tr>
            </thead>
            <tbody>
                {Array.from({ length: 6 }, (_, r) => (
                    <tr key={r} className={ROW}>
                        {ALARM_COLS.map((_, c) => (
                            <td key={c} className={`${TD} ${c === 0 ? "bg-[#cbcbcb]" : ""} ${c === 2 ? "border-r-[#cfcfcf]" : ""}`}>
                                {r === 0 && c === 2 && "<添加>"}
                            </td>
                        ))}
                    </tr>
                ))}
            </tbody>
        </table>
    </div>
)

const Crumb = ({ text, last }: { text: string; last?: boolean }) => (
    <>
        <span><Mixed text={text} latin="text-[17px]" /></span>
        {!last && <svg viewBox="0 0 6 12" className="h-3 w-[6px]" fill="#fff"><path d="M0 0v12l6-6z" /></svg>}
    </>
)

const Editor = () => (
    <main className="flex min-w-0 flex-1 flex-col">
        <div className="flex h-[31px] shrink-0 items-center justify-between bg-[#2d344d] pl-[7px] pr-2 text-lg leading-none text-white">
            <div className="flex items-center gap-[13px] font-medium">
                <Crumb text="19样题新4-25" />
                <Crumb text="HMI_1 [KTP700 Basic PN]" />
                <Crumb text="HMI 变量" />
                <Crumb text="任务 [13]" last />
            </div>
            <div className="flex gap-[9px]">
                <WinButton shape="min" label="最小化编辑器" />
                <WinButton shape="restore" label="还原编辑器" />
                <WinButton shape="max" label="最大化编辑器" />
                <WinButton shape="close" label="关闭编辑器" />
            </div>
        </div>
        <div className="h-[35px] shrink-0 border-b border-t-4 border-b-[#888] border-t-[#efefef] bg-[#cdcdcd]" />
        <div className="flex h-[33px] shrink-0 items-center justify-between bg-[#e9e9e9] pl-[9px] pr-[18px]">
            <div className="flex items-center gap-[9px]">
                <span className="flex items-center gap-[6px]"><Tool name="addRow" label="添加行" /><Sep /></span>
                <Tool name="exportI" label="导出" />
                <span className="flex items-center gap-[7px] pl-[2px]"><Tool name="importI" label="导入" /><Sep /><Tool name="linkTag" label="连接变量" /></span>
            </div>
            <Tool name="userWin" label="布局" />
        </div>
        <h2 className="h-[27px] shrink-0 bg-[#d8d8d8] pl-[31px] text-lg font-medium leading-[27px]">任务</h2>
        <TagTable />
        <HScroll thumb="flex-[849]" rest="flex-[233]" />
        <div className="flex h-[10px] shrink-0 justify-center gap-3 border-y border-[#999] bg-[#e0e0e0]">
            <button aria-label="展开下方" className="flex w-[30px] items-center justify-center bg-[#b8b8b8]"><svg viewBox="0 0 8 4" className="h-1 w-2"><path d="M0 4h8L4 0z" /></svg></button>
            <button aria-label="折叠下方" className="flex w-[30px] items-center justify-center bg-[#b8b8b8]"><svg viewBox="0 0 8 4" className="h-1 w-2"><path d="M0 0h8L4 4z" /></svg></button>
        </div>
        <div className="flex h-[30px] shrink-0 items-end bg-[#cdcdcd] text-lg leading-none">
            <span className="w-[7px] self-stretch border-b border-[#888]" />
            <button className="h-[27px] w-[138px] border border-b-0 border-[#888] bg-[linear-gradient(#f6f6f6,#e9e9e9)] pl-[14px] text-left font-bold">离散量报警</button>
            <span className="w-[2px] self-stretch border-b border-[#888]" />
            <button className={`h-[27px] w-[139px] border border-[#888] pl-[14px] text-left font-medium text-[#666] ${BAR}`}>模拟量报警</button>
            <span className="w-[2px] self-stretch border-b border-[#888]" />
            <button className={`h-[27px] w-[118px] border border-[#888] pl-[13px] text-left font-medium text-[#666] ${BAR}`}>记录变量</button>
            <span className="flex-1 self-stretch border-b border-[#888]" />
        </div>
        <div className="h-[11px] shrink-0 bg-[#e9e9e9]" />
        <AlarmTable />
        <HScroll thumb="flex-[1056]" rest="flex-[26]" />
        <div className="flex h-9 shrink-0 items-end justify-end gap-[2px] border-t-[5px] border-[#20263a] bg-[#b0b0b0] pr-[5px] text-lg leading-none">
            <button className="flex h-[28px] w-[94px] items-center gap-1 border border-b-0 border-[#888] bg-[linear-gradient(#f6f6f6,#e9e9e9)] pl-1 font-bold"><Icon name="props" />属性</button>
            <button className={`flex h-[28px] w-[94px] items-center gap-1 border border-[#888] pl-1 font-medium text-[#666] ${BAR}`}><Icon name="info" />信息</button>
            <button className={`flex h-[28px] w-[94px] items-center gap-1 border border-[#888] pl-1 font-medium text-[#666] ${BAR}`}><Icon name="diag" />诊断</button>
            <span className="ml-[22px] flex items-center gap-[9px] self-center">
                <WinButton shape="restore" label="浮动" />
                <WinButton shape="bar" label="最小化窗格" />
                <WinButton shape="up" label="展开窗格" />
            </span>
        </div>
    </main>
)

const Check = ({ label, checked, disabled }: { label: string; checked?: boolean; disabled?: boolean }) => (
    <label className={`flex h-[30px] items-center gap-[5px] ${disabled ? "text-[#8f8f8f]" : ""}`}>
        <span className="relative flex">
            <input
                type="checkbox"
                defaultChecked={checked}
                disabled={disabled}
                className="peer size-[19px] appearance-none rounded-[2px] border-2 border-[#8a8a8a] bg-[linear-gradient(#eee,#cfcfcf_50%,#e8e8e8)] checked:border-[#5c7391] checked:bg-[linear-gradient(#f2f6ff,#9cc4ee_50%,#52e4f0)] disabled:border-[#c4c4c4] disabled:bg-none"
            />
            <svg viewBox="0 0 19 19" className="pointer-events-none absolute inset-0 hidden size-[19px] peer-checked:block" fill="none" stroke="#174a98" strokeWidth="3">
                <path d="M4 8l4 5 7-8" />
            </svg>
        </span>
        {label}
    </label>
)

const Radio = ({ group, label, checked, disabled }: { group: string; label: string; checked?: boolean; disabled?: boolean }) => (
    <label className={`flex h-[30px] items-center gap-1 ${disabled ? "text-[#8f8f8f]" : ""}`}>
        <span className="relative flex">
            <input
                type="radio"
                name={group}
                defaultChecked={checked}
                disabled={disabled}
                className="peer size-[19px] appearance-none rounded-full border-2 border-[#8a8a8a] bg-[linear-gradient(#eee,#cfcfcf_50%,#e8e8e8)] checked:border-[#5c7391] checked:bg-[linear-gradient(#f2f6ff,#9cc4ee_50%,#52e4f0)] disabled:border-[#c4c4c4] disabled:bg-none"
            />
            <i className="pointer-events-none absolute inset-[6px] hidden rounded-full bg-[#174a98] peer-checked:block peer-disabled:bg-[#aaa]" />
        </span>
        {label}
    </label>
)

const Combo = ({ id }: { id: string }) => (
    <div className="relative mr-4">
        <select id={id} className="block h-[23px] w-full appearance-none border border-[#8f8f8f] bg-white">
            <option />
        </select>
        <span className={`pointer-events-none absolute right-0 top-0 flex h-[23px] w-[21px] items-center justify-center border border-[#8f8f8f] ${HEAD}`}>
            <svg viewBox="0 0 10 6" className="h-[6px] w-[10px]"><path d="M0 0h10L5 6z" /></svg>
        </span>
    </div>
)

const FlatButton = ({ children }: { children: ReactNode }) => (
    <button disabled className="h-[25px] flex-1 rounded-sm border-2 border-[#a6a6a6] bg-[linear-gradient(#f4f4f4,#e6e6e6_48%,#d8d8d8_52%,#e4e4e4)] leading-none text-[#8f8f8f]">{children}</button>
)

const TaskPane = () => (
    <aside className="flex w-[343px] shrink-0 flex-col border-l-4 border-r-2 border-[#20263a] bg-[#e9e9e9]">
        <div className={`flex h-[31px] shrink-0 items-center justify-between px-2 text-lg text-white ${PANEL_HEAD}`}>
            任务
            <span className="flex gap-[9px]">
                <WinButton shape="restore" label="浮动任务卡" />
                <WinButton shape="columns" label="任务列" />
                <WinButton shape="right" label="折叠任务卡" />
            </span>
        </div>
        <div className="h-[35px] shrink-0 border-b border-[#888] bg-[linear-gradient(#ededed_8px,#fff_8px,#e2e2e2)] pl-2 pt-1 text-lg font-bold leading-[30px]">选项</div>
        <div className="flex h-[33px] shrink-0 items-center justify-end pr-[6px]">
            <Tool name="win" label="窗口" />
        </div>
        <FoldBar title="查找和替换" open className="box-content border-b border-t-[4px] border-b-[#666] border-t-[#a0a0a0]" />
        <form className="flex min-h-0 flex-1 flex-col overflow-hidden pl-[15px] text-[15px]" onSubmit={(e) => e.preventDefault()}>
            <label htmlFor="find" className="pl-[3px] pt-[22px] pb-[2px] leading-[21px]">查找：</label>
            <Combo id="find" />
            <div className="pt-[7px]">
                <Check label="全字匹配" />
                <Check label="区分大小写" checked />
                <Check label="在子结构中查找" disabled />
                <Check label="在隐藏文本中查找" disabled />
                <Check label="使用通配符" checked />
                <Check label="使用正则表达式" />
            </div>
            <div className="pt-[9px]">
                <Radio group="dir" label="向下" checked />
                <Radio group="dir" label="向上" />
            </div>
            <div className="mr-[90px] flex pt-1"><FlatButton>查找</FlatButton></div>
            <label htmlFor="replace" className="pl-[3px] pt-[22px] pb-1 leading-[21px]">替换为：</label>
            <Combo id="replace" />
            <div className="pt-[5px]">
                <Radio group="scope" label="整个文档" disabled />
                <Radio group="scope" label="从当前位置开始" checked disabled />
                <Radio group="scope" label="选择" disabled />
            </div>
            <div className="mr-[90px] flex gap-[7px] pt-[5px]">
                <FlatButton>替换</FlatButton>
                <FlatButton>全部替换</FlatButton>
            </div>
        </form>
        <FoldBar title="语言和资源" className="box-content border-t-[3px] border-[#a0a0a0]" />
    </aside>
)

const OPEN = [
    ["overview", "总览"],
    ["screen", "任务A"],
    ["tags", "任务"],
    ["dbGrey", "读 (DB1)"],
    ["db", "读 (DB1)"],
    ["db", "写 (DB2)"],
    ["link", "连接"],
    ["defTags", "默认变..."],
    ["screen", "任务A"],
    ["screen", "任务B"],
    ["link", "连接"],
]

const TaskBar = () => (
    <footer className="flex h-9 shrink-0 items-center border-b-2 border-[#d2ced2] bg-[#1d1d1d] text-base leading-none">
        <button className="flex w-[226px] items-center gap-[14px] pl-[43px] text-lg font-medium text-white">
            <svg viewBox="0 0 10 16" className="h-4 w-[10px]" fill="#fff"><path d="M9 0v16L1 8z" /></svg>
            <span><Mixed text="Portal 视图" latin="text-[17px]" /></span>
        </button>
        <div className="flex gap-[3px]">
            {OPEN.map(([icon, text], i) => (
                <button key={i} className={`flex h-[26px] w-[107px] items-center gap-[6px] pl-1 ${i === 2 ? "bg-white font-bold" : "bg-[#c3c3c3]"}`}>
                    <Icon name={icon} />
                    <span><Mixed text={text} /></span>
                </button>
            ))}
        </div>
        <button aria-label="切换窗口" className="ml-[42px] flex h-[26px] w-[26px] items-center justify-center bg-[#d8d8d8]"><Icon name="switchWin" /></button>
        <div className="ml-[7px] flex h-full min-w-0 flex-1 items-center gap-[6px] border-l border-[#4a4a4a] pl-[3px] text-white">
            <Icon name="ok" />
            <span className="truncate leading-6"><Mixed text="项目 19样题新4-25 已成功保存。" latin="text-base" /></span>
        </div>
    </footer>
)

export default function App() {
    return (
        <div className="flex h-screen flex-col overflow-hidden bg-[#cdcdcd] font-['Noto_Sans','Noto_Sans_CJK_SC',sans-serif] text-black">
            <Defs />
            <TitleBar />
            <Header />
            <div className="flex min-h-0 flex-1">
                <div className="flex w-[29px] shrink-0 flex-col bg-[#b1b1b1]">
                    <div className="h-8 border-b border-[#e8e8e8]" />
                    <div className="flex h-[276px] items-center justify-center border-b border-[#e8e8e8]">
                        <button className="rotate-180 text-lg font-bold leading-6 text-white [text-orientation:sideways] [writing-mode:vertical-rl]">可视化</button>
                    </div>
                </div>
                <ProjectTree />
                <Editor />
                <TaskPane />
                <div className="flex w-[30px] shrink-0 flex-col gap-1 bg-[#b1b1b1] pt-[39px]">
                    <button className="flex h-[92px] w-[26px] flex-col items-center gap-1 border border-l-0 border-[#888] bg-[#ececec] pt-1 text-lg font-medium leading-6">
                        <Icon name="clip" />
                        <span className="[text-orientation:sideways] [writing-mode:vertical-rl]">任务</span>
                    </button>
                    <button className="flex h-[73px] w-[26px] flex-col items-center gap-1 border border-l-0 border-[#888] bg-[#d9d9d9] pt-1 text-lg leading-6 text-[#666]">
                        <Icon name="book" />
                        <span className="[text-orientation:sideways] [writing-mode:vertical-rl]">库</span>
                    </button>
                </div>
            </div>
            <TaskBar />
        </div>
    )
}
